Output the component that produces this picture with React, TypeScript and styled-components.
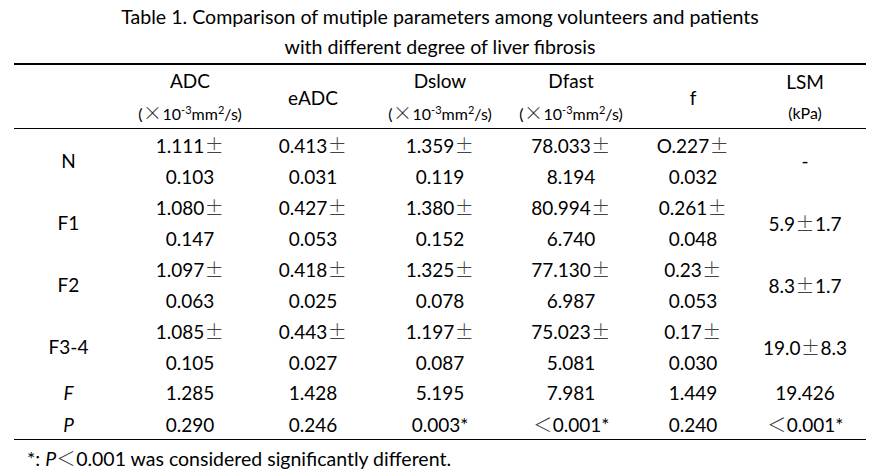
import React from 'react';
import styled, { createGlobalStyle } from 'styled-components';

const GlobalStyle = createGlobalStyle`
  body {
    margin: 0;
    background: #fff;
  }
`;

type Group = {
  label: string;
  values: [string, string][];
  lsm: string;
};

const groups: Group[] = [
  {
    label: 'N',
    values: [['1.111', '0.103'], ['0.413', '0.031'], ['1.359', '0.119'], ['78.033', '8.194'], ['O.227', '0.032']],
    lsm: '-',
  },
  {
    label: 'F1',
    values: [['1.080', '0.147'], ['0.427', '0.053'], ['1.380', '0.152'], ['80.994', '6.740'], ['0.261', '0.048']],
    lsm: '5.9|1.7',
  },
  {
    label: 'F2',
    values: [['1.097', '0.063'], ['0.418', '0.025'], ['1.325', '0.078'], ['77.130', '6.987'], ['0.23', '0.053']],
    lsm: '8.3|1.7',
  },
  {
    label: 'F3-4',
    values: [['1.085', '0.105'], ['0.443', '0.027'], ['1.197', '0.087'], ['75.023', '5.081'], ['0.17', '0.030']],
    lsm: '19.0|8.3',
  },
];

const fRow = ['1.285', '1.428', '5.195', '7.981', '1.449', '19.426'];
const pRow = ['0.290', '0.246', '0.003*', '＜0.001*', '0.240', '＜0.001*'];

export default function App() {
  const renderLsm = (v: string) => {
    if (!v.includes('|')) return <span>{v}</span>;
    const [a, b] = v.split('|');
    return (
      <span>
        {a}
        <Pm>±</Pm>
        {b}
      </span>
    );
  };

  const renderLt = (v: string) => {
    if (!v.startsWith('＜')) return <span>{v}</span>;
    return (
      <span>
        <Lt>＜</Lt>
        {v.slice(1)}
      </span>
    );
  };

  return (
    <Page>
      <GlobalStyle />
      <Title>
        <span>Table 1. Comparison of mutiple parameters among volunteers and patients</span>
        <span>with different degree of liver fibrosis</span>
      </Title>
      <Table>
        <HeadRow>
          <Cell />
          <Cell>
            <span>ADC</span>
            <Unit>
              (<Times>×</Times>10<sup>-3</sup>mm<sup>2</sup>/s)
            </Unit>
          </Cell>
          <Cell>eADC</Cell>
          <Cell>
            <span>Dslow</span>
            <Unit>
              (<Times>×</Times>10<sup>-3</sup>mm<sup>2</sup>/s)
            </Unit>
          </Cell>
          <Cell>
            <span>Dfast</span>
            <Unit>
              (<Times>×</Times>10<sup>-3</sup>mm<sup>2</sup>/s)
            </Unit>
          </Cell>
          <Cell>f</Cell>
          <Cell>
            <span>LSM</span>
            <Unit>(kPa)</Unit>
          </Cell>
        </HeadRow>

        {groups.map((g) => (
          <BodyRow key={g.label} $height={62}>
            <Cell>{g.label}</Cell>
            {g.values.map(([mean, sd], i) => (
              <Cell key={i}>
                <span>
                  {mean}
                  <Pm>±</Pm>
                </span>
                <span>{sd}</span>
              </Cell>
            ))}
            <Cell>{renderLsm(g.lsm)}</Cell>
          </BodyRow>
        ))}

        <BodyRow $height={31}>
          <Cell $italic>F</Cell>
          {fRow.map((v, i) => (
            <Cell key={i}>{v}</Cell>
          ))}
        </BodyRow>
        <BodyRow $height={31}>
          <Cell $italic>P</Cell>
          {pRow.map((v, i) => (
            <Cell key={i}>{renderLt(v)}</Cell>
          ))}
        </BodyRow>
      </Table>
      <Footnote>
        *: <i>P</i>
        <Lt>＜</Lt>0.001 was considered significantly different.
      </Footnote>
    </Page>
  );
}

const Page = styled.div`
  width: 881px;
  box-sizing: border-box;
  padding: 2px 15px 0 14px;
  color: #000;
  font-family: Lato, 'Liberation Sans', sans-serif;
`;

const Title = styled.h1`
  margin: 0 0 1px;
  font-size: 19.6px;
  font-weight: 400;
  line-height: 30px;
  text-align: center;

  span {
    display: block;
  }
`;

const Table = styled.div`
  border-top: 2px solid #000;
  border-bottom: 1px solid #000;
`;

const Row = styled.div`
  display: grid;
  grid-template-columns: 109px 134px 112px 142px 120px 124px 100px;
  padding-right: 11px;
`;

const HeadRow = styled(Row)`
  height: 63px;
  border-bottom: 1px solid #000;
`;

const BodyRow = styled(Row)<{ $height: number }>`
  height: ${(p) => p.$height}px;
`;

const Cell = styled.div<{ $italic?: boolean }>`
  display: flex;
  flex-direction: column;
  justify-content: center;
  align-items: center;
  font-size: 19px;
  line-height: 31px;
  white-space: nowrap;
  font-style: ${(p) => (p.$italic ? 'italic' : 'normal')};
`;

const Unit = styled.span`
  font-size: 16px;
  line-height: 31px;

  sup {
    font-size: 11px;
    line-height: 0;
    vertical-align: 6px;
  }
`;

const Times = styled.span`
  display: inline-block;
  width: 20px;
  font-family: 'Noto Sans CJK SC', sans-serif;
  font-weight: 300;
  font-size: 19px;
  text-align: center;
  color: #333;
`;

const Pm = styled.span`
  display: inline-block;
  width: 20px;
  font-family: 'Noto Sans CJK SC', sans-serif;
  font-weight: 300;
  text-align: center;
  color: #444;
`;

const Lt = styled.span`
  display: inline-block;
  width: 20px;
  font-family: 'Noto Sans CJK SC', sans-serif;
  font-weight: 300;
  text-align: center;
  color: #333;
`;

const Footnote = styled.div`
  padding: 3px 0 0 13px;
  font-size: 19.5px;
  line-height: 30px;
`;
